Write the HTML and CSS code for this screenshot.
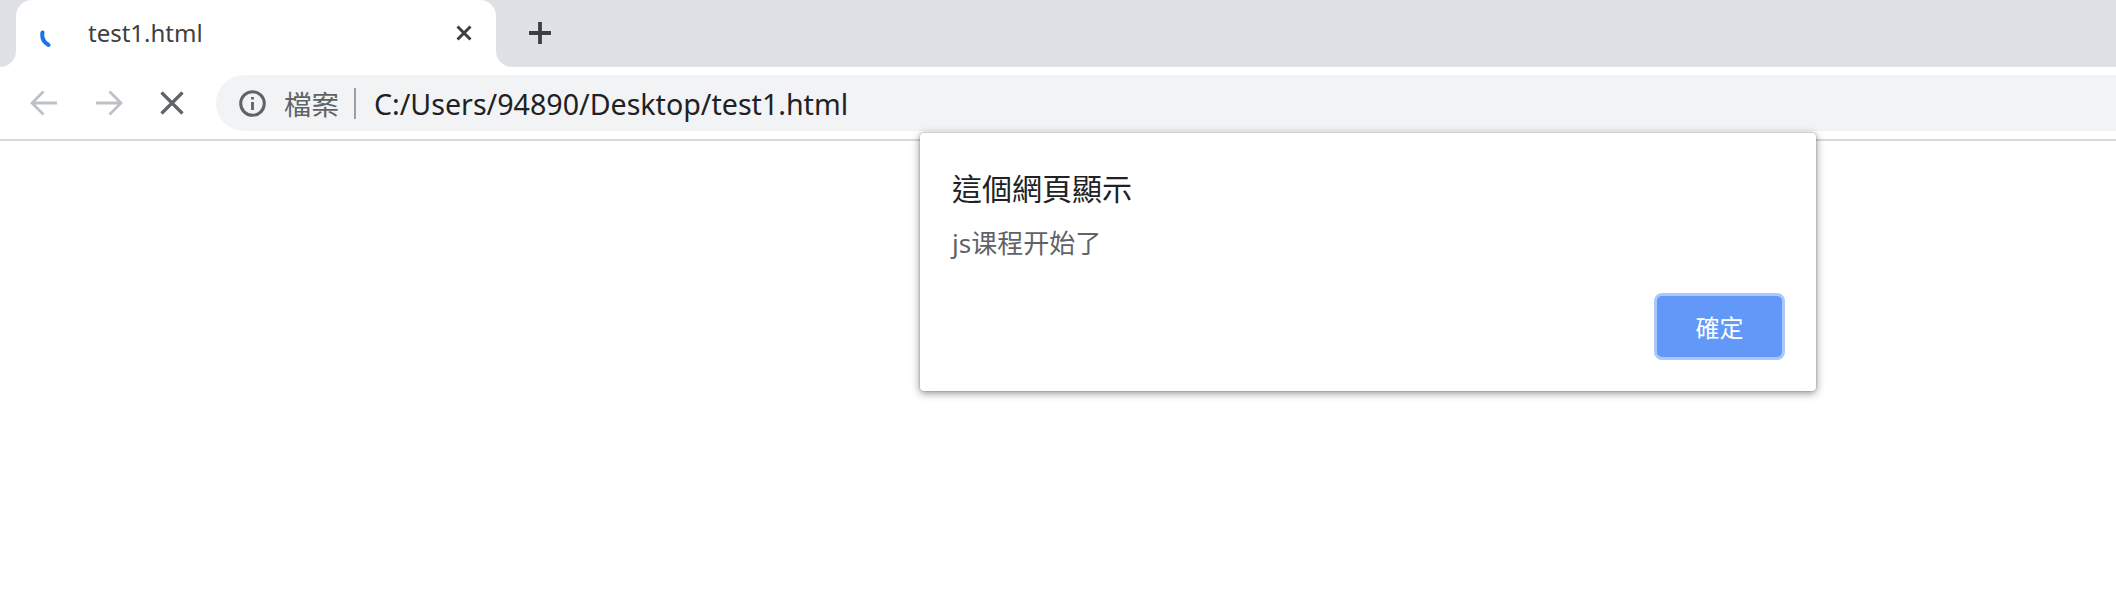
FILE: index.html
```html
<!DOCTYPE html>
<html lang="zh-Hant">
<head>
  <meta charset="UTF-8" />
  <title>test1.html</title>
  <link rel="stylesheet" href="styles.css">
</head>
<body>
  <div class="tab-strip">
    <div class="tab">
      <svg class="favicon" width="12" height="18" viewBox="0 0 12 18">
        <path d="M2.5 2.5 C1.6 7 3.5 12 8.5 15" fill="none" stroke="#1a73e8" stroke-width="4" stroke-linecap="round" />
      </svg>
      <span class="tab-title">test1.html</span>
      <svg class="tab-close" width="16" height="16" viewBox="0 0 16 16">
        <path d="M1.5 1.5 L14.5 14.5 M14.5 1.5 L1.5 14.5" stroke="#3c4043" stroke-width="3" />
      </svg>
    </div>
    <svg class="new-tab" width="24" height="24" viewBox="0 0 24 24">
      <path d="M12 1 V23 M1 12 H23" stroke="#3c4043" stroke-width="3.8" />
    </svg>
  </div>

  <div class="toolbar">
    <svg class="nav-btn back" width="28" height="26" viewBox="0 0 28 26">
      <path d="M27 13 H3 M13.5 1.5 L2 13 L13.5 24.5" fill="none" stroke="#bdc1c6" stroke-width="2.8" />
    </svg>
    <svg class="nav-btn forward" width="28" height="26" viewBox="0 0 28 26">
      <path d="M1 13 H25 M14.5 1.5 L26 13 L14.5 24.5" fill="none" stroke="#bdc1c6" stroke-width="2.8" />
    </svg>
    <svg class="nav-btn stop" width="24" height="24" viewBox="0 0 24 24">
      <path d="M1.5 1.5 L22.5 22.5 M22.5 1.5 L1.5 22.5" stroke="#5f6368" stroke-width="3.2" />
    </svg>
    <div class="address-bar">
      <svg class="info-icon" width="27" height="27" viewBox="0 0 27 27">
        <circle cx="13.5" cy="13.5" r="11.8" fill="none" stroke="#5f6368" stroke-width="3" />
        <path d="M13.5 12 V20 M13.5 7 V9.6" stroke="#5f6368" stroke-width="2.8" />
      </svg>
      <span class="scheme">檔案</span>
      <span class="divider"></span>
      <span class="url">C:/Users/94890/Desktop/test1.html</span>
    </div>
  </div>

  <div class="dialog">
    <div class="dialog-title">這個網頁顯示</div>
    <div class="dialog-msg">js课程开始了</div>
    <div class="dialog-actions">
      <button class="ok-btn">確定</button>
    </div>
  </div>
</body>
</html>
```

FILE: styles.css
```css
* {
  margin: 0;
  padding: 0;
  box-sizing: border-box;
}
body {
  font-family: 'Noto Sans', 'Noto Sans CJK TC', sans-serif;
  background: #fff;
  height: 612px;
  overflow: hidden;
  position: relative;
}
.tab-strip {
  height: 67px;
  background: #dee1e6;
  display: flex;
  align-items: center;
  padding-left: 16px;
}
.tab {
  position: relative;
  width: 480px;
  height: 67px;
  background: #fff;
  border-radius: 16px 16px 0 0;
  display: flex;
  align-items: center;
  padding-left: 24px;
}
.tab::before,
.tab::after {
  content: '';
  position: absolute;
  bottom: 0;
  width: 16px;
  height: 16px;
}
.tab::before {
  left: -16px;
  background: radial-gradient(circle at 0 0, #dee1e6 15.5px, #fff 16.5px);
}
.tab::after {
  right: -16px;
  background: radial-gradient(circle at 100% 0, #dee1e6 15.5px, #fff 16.5px);
}
.favicon {
  flex: none;
  margin-top: 10px;
}
.tab-title {
  margin-left: 36px;
  font-size: 24px;
  color: #3c4043;
  margin-top: -2px;
}
.tab-close {
  margin-left: auto;
  margin-right: 24px;
  margin-top: -1px;
}
.new-tab {
  margin-left: 32px;
  margin-top: -1px;
}
.toolbar {
  height: 74px;
  background: #fff;
  border-bottom: 2px solid #d9d9dd;
  display: flex;
  align-items: center;
  padding-left: 30px;
}
.nav-btn {
  flex: none;
}
.forward {
  margin-left: 37px;
}
.stop {
  margin-left: 37px;
}
.address-bar {
  flex: 1;
  height: 56px;
  margin-left: 32px;
  background: #f1f3f4;
  border-radius: 28px 0 0 28px;
  display: flex;
  align-items: center;
  padding-left: 23px;
}
.info-icon {
  flex: none;
}
.scheme {
  margin-left: 18px;
  font-size: 27.5px;
  color: #5f6368;
}
.divider {
  width: 2px;
  height: 31px;
  margin-left: 15px;
  background: #9aa0a6;
}
.url {
  margin-left: 18px;
  font-size: 28.6px;
  color: #202124;
}
.dialog {
  position: absolute;
  left: 920px;
  top: 133px;
  width: 896px;
  height: 258px;
  background: #fff;
  border-radius: 4px;
  box-shadow: 0 2px 8px rgba(0, 0, 0, 0.45), 0 0 2px rgba(0, 0, 0, 0.3);
  padding: 34px 31px 0 32px;
  display: flex;
  flex-direction: column;
}
.dialog-title {
  font-size: 30px;
  line-height: 44px;
  color: #202124;
}
.dialog-msg {
  margin-top: 14px;
  font-size: 26px;
  line-height: 36px;
  color: #5f6368;
}
.dialog-actions {
  display: flex;
  justify-content: flex-end;
  margin-top: 32px;
}
.ok-btn {
  width: 131px;
  height: 67px;
  background: #6299f8;
  border: 3px solid #a9c8fb;
  border-radius: 8px;
  color: #fff;
  font-family: inherit;
  font-size: 24px;
}
```
